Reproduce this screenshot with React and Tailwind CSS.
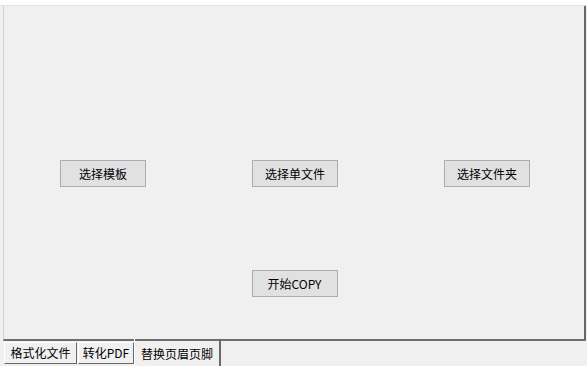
export default function App() {
  const font = { fontFamily: '"Noto Sans CJK SC", "Microsoft YaHei", sans-serif' };
  const btn =
    "w-[86px] h-[27px] bg-[#e1e1e1] border border-[#adadad] text-[12px] text-black flex items-center justify-center";
  return (
    <div className="w-[587px] h-[366px] bg-[#f0f0f0] flex flex-col overflow-hidden" style={font}>
      <div className="h-[6px] bg-white border-b border-[#e3e3e3] shrink-0" />
      <div className="flex-1 flex">
        <div className="w-[3px] bg-[#f0f0f0]" />
        <div className="flex-1 border-l border-[#d0d0d0] border-r-2 border-r-[#696969] border-b-2 border-b-[#6e6e6e] flex flex-col">
          <div className="h-[154px]" />
          <div className="flex justify-between pl-[56px] pr-[54px]">
            <div className={btn}>选择模板</div>
            <div className={btn}>选择单文件</div>
            <div className={btn}>选择文件夹</div>
          </div>
          <div className="h-[83px]" />
          <div className="flex justify-center pl-[1px]">
            <div className={btn}>开始COPY</div>
          </div>
        </div>
        <div className="w-[1px]" />
      </div>
      <div className="h-[25px] flex items-start pl-[4px] text-[12px] text-black shrink-0">
        <div className="mt-[1px] h-[22px] w-[73px] border-l border-t border-white border-r border-r-[#696969] border-b border-b-[#696969] flex items-center justify-center">
          格式化文件
        </div>
        <div className="mt-[1px] ml-[1px] h-[22px] w-[56px] border-l border-t border-white border-r border-r-[#696969] border-b border-b-[#696969] flex items-center justify-center">
          转化PDF
        </div>
        <div className="-mt-[2px] h-[27px] w-[87px] border-l border-white border-r-2 border-r-[#696969] flex items-center justify-center pt-[3px]">
          替换页眉页脚
        </div>
      </div>
    </div>
  );
}
